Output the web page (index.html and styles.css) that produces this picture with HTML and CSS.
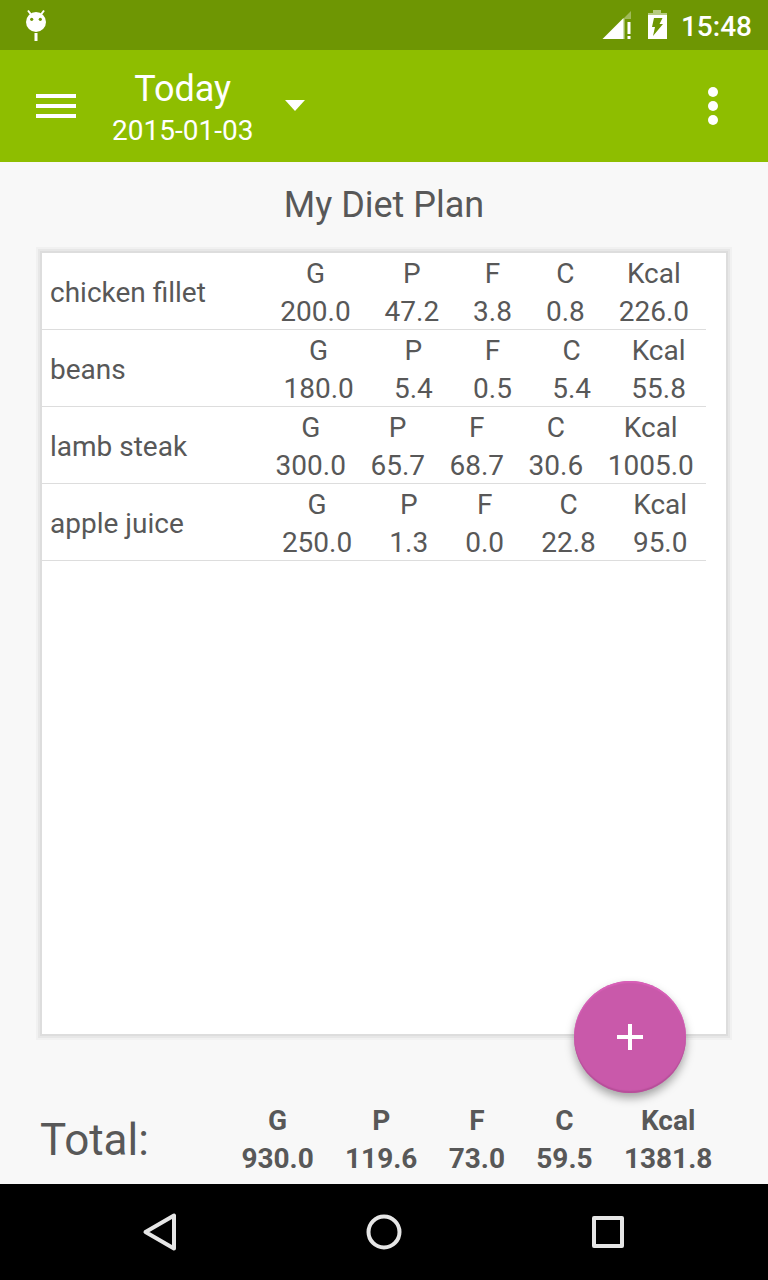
FILE: index.html
```html
<!DOCTYPE html>
<html lang="en">
<head>
  <meta charset="UTF-8" />
  <title>My Diet Plan</title>
  <meta name="viewport" content="width=device-width, initial-scale=1.0" />
  <link rel="stylesheet" href="styles.css">
</head>
<body>
  <div class="status-bar">
    <svg width="24" height="32" viewBox="0 0 24 32" aria-hidden="true">
      <path d="M4 1.500l3 4M20 1.500l-3 4" stroke="#fff" stroke-width="2" fill="none" />
      <circle cx="12" cy="13" r="10" fill="#fff" />
      <circle cx="7.700" cy="10.300" r="1.600" fill="#6e9603" />
      <circle cx="16.300" cy="10.300" r="1.600" fill="#6e9603" />
      <rect x="10.500" y="24" width="3" height="8" fill="#fff" />
    </svg>
    <div class="status-right">
      <svg width="31" height="30" viewBox="0 0 31 30" aria-hidden="true">
        <path d="M29 1V9H23V29H21V9Z" fill="#fff" fill-opacity="0.350" />
        <path d="M0.500 29L21.500 8V29Z" fill="#fff" />
        <path d="M25.500 12h3v12h-3zM25.500 26h3v3h-3z" fill="#fff" />
      </svg>
      <svg width="20" height="30" viewBox="0 0 20 30" aria-hidden="true">
        <path d="M6 0h8v3h6v2H1V3h5z" fill="#fff" fill-opacity="0.500" />
        <path d="M1 5h19v24H1z" fill="#fff" />
        <path d="M7 8h8.500l-3 6H16L6 26l2-9H5z" fill="#6e9603" />
      </svg>
      <span class="clock">15:48</span>
    </div>
  </div>

  <header>
    <button class="icon-button" aria-label="Menu">
      <svg width="40" height="24" viewBox="0 0 40 24">
        <path d="M0 0h40v4H0zM0 10h40v4H0zM0 20h40v4H0z" fill="#fff" />
      </svg>
    </button>
    <button class="date-picker">
      <span class="date-text">
        <span class="day">Today</span>
        <span class="date">2015-01-03</span>
      </span>
      <svg width="20" height="12" viewBox="0 0 20 12" aria-hidden="true">
        <path d="M0 0h20L10 11z" fill="#fff" />
      </svg>
    </button>
    <button class="icon-button more" aria-label="More options">
      <svg width="10" height="38" viewBox="0 0 10 38">
        <circle cx="5" cy="5" r="5" fill="#fff" />
        <circle cx="5" cy="19" r="5" fill="#fff" />
        <circle cx="5" cy="33" r="5" fill="#fff" />
      </svg>
    </button>
  </header>

  <main>
    <h1>My Diet Plan</h1>

    <div class="card">
      <ul class="meals">
        <li>
          <span class="name">chicken fillet</span>
          <dl class="nutrients">
            <div><dt>G</dt><dd>200.0</dd></div>
            <div><dt>P</dt><dd>47.2</dd></div>
            <div><dt>F</dt><dd>3.8</dd></div>
            <div><dt>C</dt><dd>0.8</dd></div>
            <div><dt>Kcal</dt><dd>226.0</dd></div>
          </dl>
        </li>
        <li>
          <span class="name">beans</span>
          <dl class="nutrients">
            <div><dt>G</dt><dd>180.0</dd></div>
            <div><dt>P</dt><dd>5.4</dd></div>
            <div><dt>F</dt><dd>0.5</dd></div>
            <div><dt>C</dt><dd>5.4</dd></div>
            <div><dt>Kcal</dt><dd>55.8</dd></div>
          </dl>
        </li>
        <li>
          <span class="name">lamb steak</span>
          <dl class="nutrients">
            <div><dt>G</dt><dd>300.0</dd></div>
            <div><dt>P</dt><dd>65.7</dd></div>
            <div><dt>F</dt><dd>68.7</dd></div>
            <div><dt>C</dt><dd>30.6</dd></div>
            <div><dt>Kcal</dt><dd>1005.0</dd></div>
          </dl>
        </li>
        <li>
          <span class="name">apple juice</span>
          <dl class="nutrients">
            <div><dt>G</dt><dd>250.0</dd></div>
            <div><dt>P</dt><dd>1.3</dd></div>
            <div><dt>F</dt><dd>0.0</dd></div>
            <div><dt>C</dt><dd>22.8</dd></div>
            <div><dt>Kcal</dt><dd>95.0</dd></div>
          </dl>
        </li>
      </ul>
      <button class="add-button" aria-label="Add food">
        <svg width="26" height="26" viewBox="0 0 26 26">
          <path d="M11 0h4v11h11v4H15v11h-4V15H0v-4h11z" fill="#fff" />
        </svg>
      </button>
    </div>

    <div class="total">
      <h2>Total:</h2>
      <dl class="nutrients">
        <div><dt>G</dt><dd>930.0</dd></div>
        <div><dt>P</dt><dd>119.6</dd></div>
        <div><dt>F</dt><dd>73.0</dd></div>
        <div><dt>C</dt><dd>59.5</dd></div>
        <div><dt>Kcal</dt><dd>1381.8</dd></div>
      </dl>
    </div>
  </main>

  <nav>
    <button aria-label="Back">
      <svg width="40" height="40" viewBox="0 0 40 40">
        <path d="M34 3.500V36.500L5.500 20z" fill="none" stroke="#e6e6e6" stroke-width="4" stroke-linejoin="round" />
      </svg>
    </button>
    <button aria-label="Home">
      <svg width="40" height="40" viewBox="0 0 40 40">
        <circle cx="20" cy="20" r="15.500" fill="none" stroke="#e6e6e6" stroke-width="4" />
      </svg>
    </button>
    <button aria-label="Recent apps">
      <svg width="40" height="40" viewBox="0 0 40 40">
        <rect x="6" y="6" width="28" height="28" fill="none" stroke="#e6e6e6" stroke-width="4" stroke-linejoin="round" />
      </svg>
    </button>
  </nav>
</body>
</html>
```
FILE: styles.css
```css
:root {
  --status-color: #6e9603;
  --primary-color: #8ebe00;
  --accent-color: #c959aa;
  --bg-color: #f8f8f8;
  --text-color: #585858;
  --line-color: #dddddd;
}

* {
  box-sizing: border-box;
}

body {
  margin: 0;
  min-height: 100vh;
  display: flex;
  flex-direction: column;
  font-family: Roboto, sans-serif;
  font-size: 28px;
  background-color: var(--bg-color);
  color: var(--text-color);
}

button {
  padding: 0;
  border: none;
  background: none;
  color: inherit;
  font: inherit;
  cursor: pointer;
}

svg {
  display: block;
}

.status-bar {
  display: flex;
  justify-content: space-between;
  align-items: center;
  height: 50px;
  padding: 0 16px 0 24px;
  background-color: var(--status-color);
  color: white;
}

.status-right {
  display: flex;
  align-items: center;
  gap: 14px;
}

.clock {
  padding-top: 4px;
  font-weight: 500;
  line-height: 32px;
}

header {
  display: flex;
  align-items: center;
  height: 112px;
  padding: 0 50px 0 36px;
  background-color: var(--primary-color);
  color: white;
}

.date-picker {
  display: flex;
  align-items: center;
  gap: 32px;
  margin-left: 36px;
}

.date-text {
  display: flex;
  flex-direction: column;
  padding-top: 6px;
}

.day {
  font-size: 36px;
  line-height: 44px;
}

.date {
  line-height: 40px;
}

.more {
  margin-left: auto;
}

main {
  flex: 1;
  display: flex;
  flex-direction: column;
  padding: 0 40px 7px;
}

h1 {
  margin: 0;
  padding: 21px 0 24px;
  font-size: 36px;
  font-weight: 400;
  line-height: 44px;
  text-align: center;
}

.card {
  position: relative;
  flex: 1;
  border: 2px solid var(--line-color);
  background-color: white;
  box-shadow: 0 0 0 2px #e7e7e7, 0 0 0 4px #f1f1f1;
}

.meals {
  margin: 0;
  padding: 0 20px 0 0;
  list-style: none;
}

.meals li {
  display: grid;
  grid-template-columns: 1fr 2fr;
  align-items: center;
  padding-top: 2px;
  border-bottom: 1px solid var(--line-color);
}

.name {
  padding-left: 8px;
}

/* spare width is shared equally, so columns follow their own numbers */
.nutrients {
  display: flex;
  margin: 0;
  padding-top: 2px;
  line-height: 34px;
  text-align: center;
}

.nutrients div {
  display: flex;
  flex-direction: column;
  flex: 1 1 auto;
  gap: 4px;
}

.nutrients dd {
  margin: 0;
}

.add-button {
  position: absolute;
  right: 40px;
  bottom: -59px;
  display: flex;
  align-items: center;
  justify-content: center;
  width: 112px;
  height: 112px;
  border-radius: 50%;
  background-color: var(--accent-color);
  box-shadow: inset 0 2px 1px #d85fb8, inset 0 -2px 1px #b74f9a,
    0 5px 10px rgba(0, 0, 0, 0.35);
}

.total {
  display: flex;
  align-items: center;
  padding-top: 67px;
}

.total h2 {
  flex: 0 0 27%;
  margin: 0;
  font-size: 44px;
  font-weight: 400;
  line-height: 52px;
}

.total .nutrients {
  flex: 1;
  padding: 1px 0;
  font-weight: 700;
}

nav {
  display: flex;
  justify-content: center;
  gap: 184px;
  padding: 28px 0;
  background-color: black;
}
```
